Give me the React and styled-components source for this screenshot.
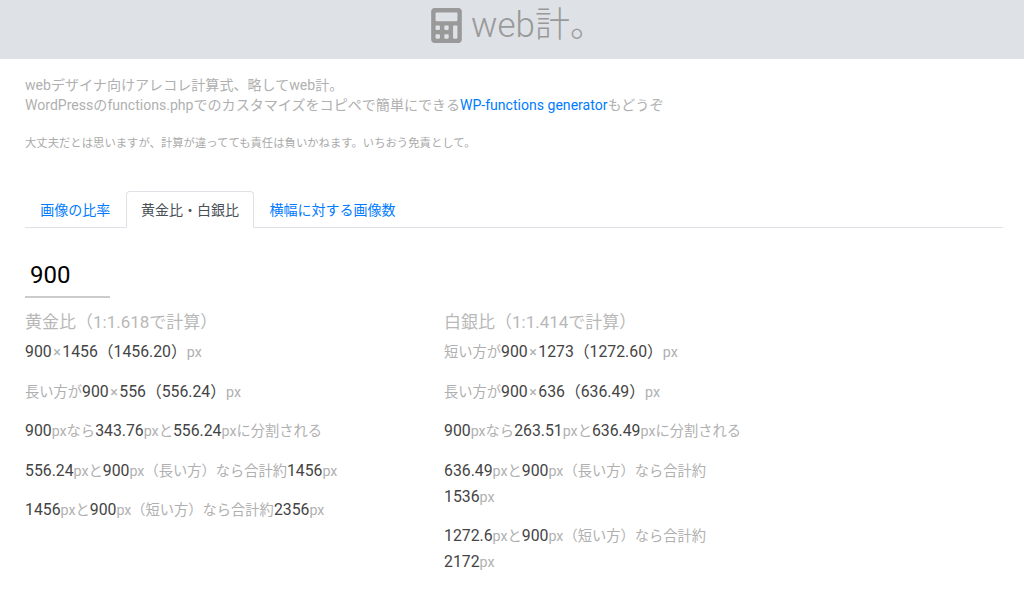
import React from "react";
import styled, { createGlobalStyle } from "styled-components";
import { FaCalculator } from "react-icons/fa";

const GlobalStyle = createGlobalStyle`
    body {
        margin: 0;
        background: #fff;
        font-family: Roboto, "Noto Sans CJK JP", sans-serif;
        font-size: 14px;
        line-height: 20px;
        color: #aaa;
    }
`;

const Header = styled.header`
    height: 59px;
    box-sizing: border-box;
    padding: 0 0 8px 10px;
    background: #dee2e6;
    display: flex;
    align-items: center;
    justify-content: center;
    gap: 7px;
    color: #999;
`;

const Logo = styled.h1`
    margin: 0;
    font-size: 35px;
    font-weight: 300;
    line-height: 52px;
`;

const Main = styled.main`
    padding: 16px 21px 0 25px;
`;

const Intro = styled.p`
    margin: 0;
    font-size: 14.07px;
    line-height: 20px;
    color: #b0b0b0;
`;

const Notice = styled.p`
    margin: 20px 0 40px;
    font-size: 11.35px;
    line-height: 16px;
    color: #aaa;
`;

const Blue = styled.a`
    color: #007bff;
    text-decoration: none;
`;

const Tabs = styled.ul`
    display: flex;
    list-style: none;
    margin: 0 0 28px;
    padding: 0;
    height: 36px;
    border-bottom: 1px solid #dee2e6;
`;

const Tab = styled.li`
    height: 37px;
    box-sizing: border-box;
    padding: 8px 14.3px 0;
    border: 1px solid ${props => (props.$active ? "#dee2e6" : "transparent")};
    border-bottom-color: ${props => (props.$active ? "#fff" : "transparent")};
    border-radius: 4px 4px 0 0;
    background: ${props => (props.$active ? "#fff" : "transparent")};
    color: ${props => (props.$active ? "#495057" : "#007bff")};
    font-size: 14px;
    line-height: 20px;
`;

const Field = styled.div`
    width: 85px;
    height: 42px;
    box-sizing: border-box;
    padding: 0 5px;
    border-bottom: 2px solid #ccc;
    color: #000;
    font-size: 24px;
    line-height: 38px;
    margin-bottom: 12px;
`;

const Columns = styled.div`
    display: grid;
    grid-template-columns: 419px 300px;
`;

const Heading = styled.h2`
    margin: 0 0 5px;
    font-size: 17px;
    font-weight: 400;
    line-height: 24px;
    color: #b8b8b8;
    white-space: nowrap;
`;

const Row = styled.p`
    margin: 0 0 13.6px;
    font-size: 14.25px;
    line-height: 26px;
    color: #b0b0b0;
`;

const Num = styled.span`
    color: #444;
    font-size: 15.8px;
`;

const Times = styled.span`
    padding: 0 1.5px;
`;

const Unit = styled.span`
    white-space: nowrap;
`;

const N = ({ children }) => <Num>{children}</Num>;

export default function App() {
    return (
        <>
            <GlobalStyle />
            <Header>
                <FaCalculator size={35} />
                <Logo>web計。</Logo>
            </Header>
            <Main>
                <Intro>
                    webデザイナ向けアレコレ計算式、略してweb計。<br />
                    WordPressのfunctions.phpでのカスタマイズをコピペで簡単にできる<Blue href="#">WP-functions generator</Blue>もどうぞ
                </Intro>
                <Notice>大丈夫だとは思いますが、計算が違ってても責任は負いかねます。いちおう免責として。</Notice>
                <Tabs>
                    <Tab>画像の比率</Tab>
                    <Tab $active>黄金比・白銀比</Tab>
                    <Tab>横幅に対する画像数</Tab>
                </Tabs>
                <Field>900</Field>
                <Columns>
                    <section>
                        <Heading>黄金比（1:1.618で計算）</Heading>
                        <Row><N>900</N><Times>×</Times><N>1456（1456.20）</N><Unit>px</Unit></Row>
                        <Row>長い方が<N>900</N><Times>×</Times><N>556（556.24）</N><Unit>px</Unit></Row>
                        <Row><N>900</N><Unit>px</Unit>なら<N>343.76</N><Unit>px</Unit>と<N>556.24</N><Unit>px</Unit>に分割される</Row>
                        <Row><N>556.24</N><Unit>px</Unit>と<N>900</N><Unit>px</Unit>（長い方）なら合計約<N>1456</N><Unit>px</Unit></Row>
                        <Row><N>1456</N><Unit>px</Unit>と<N>900</N><Unit>px</Unit>（短い方）なら合計約<N>2356</N><Unit>px</Unit></Row>
                    </section>
                    <section>
                        <Heading>白銀比（1:1.414で計算）</Heading>
                        <Row>短い方が<N>900</N><Times>×</Times><N>1273（1272.60）</N><Unit>px</Unit></Row>
                        <Row>長い方が<N>900</N><Times>×</Times><N>636（636.49）</N><Unit>px</Unit></Row>
                        <Row><N>900</N><Unit>px</Unit>なら<N>263.51</N><Unit>px</Unit>と<N>636.49</N><Unit>px</Unit>に分割される</Row>
                        <Row><N>636.49</N><Unit>px</Unit>と<N>900</N><Unit>px</Unit>（長い方）なら合計約<N>1536</N><Unit>px</Unit></Row>
                        <Row><N>1272.6</N><Unit>px</Unit>と<N>900</N><Unit>px</Unit>（短い方）なら合計約<N>2172</N><Unit>px</Unit></Row>
                    </section>
                </Columns>
            </Main>
        </>
    );
}
